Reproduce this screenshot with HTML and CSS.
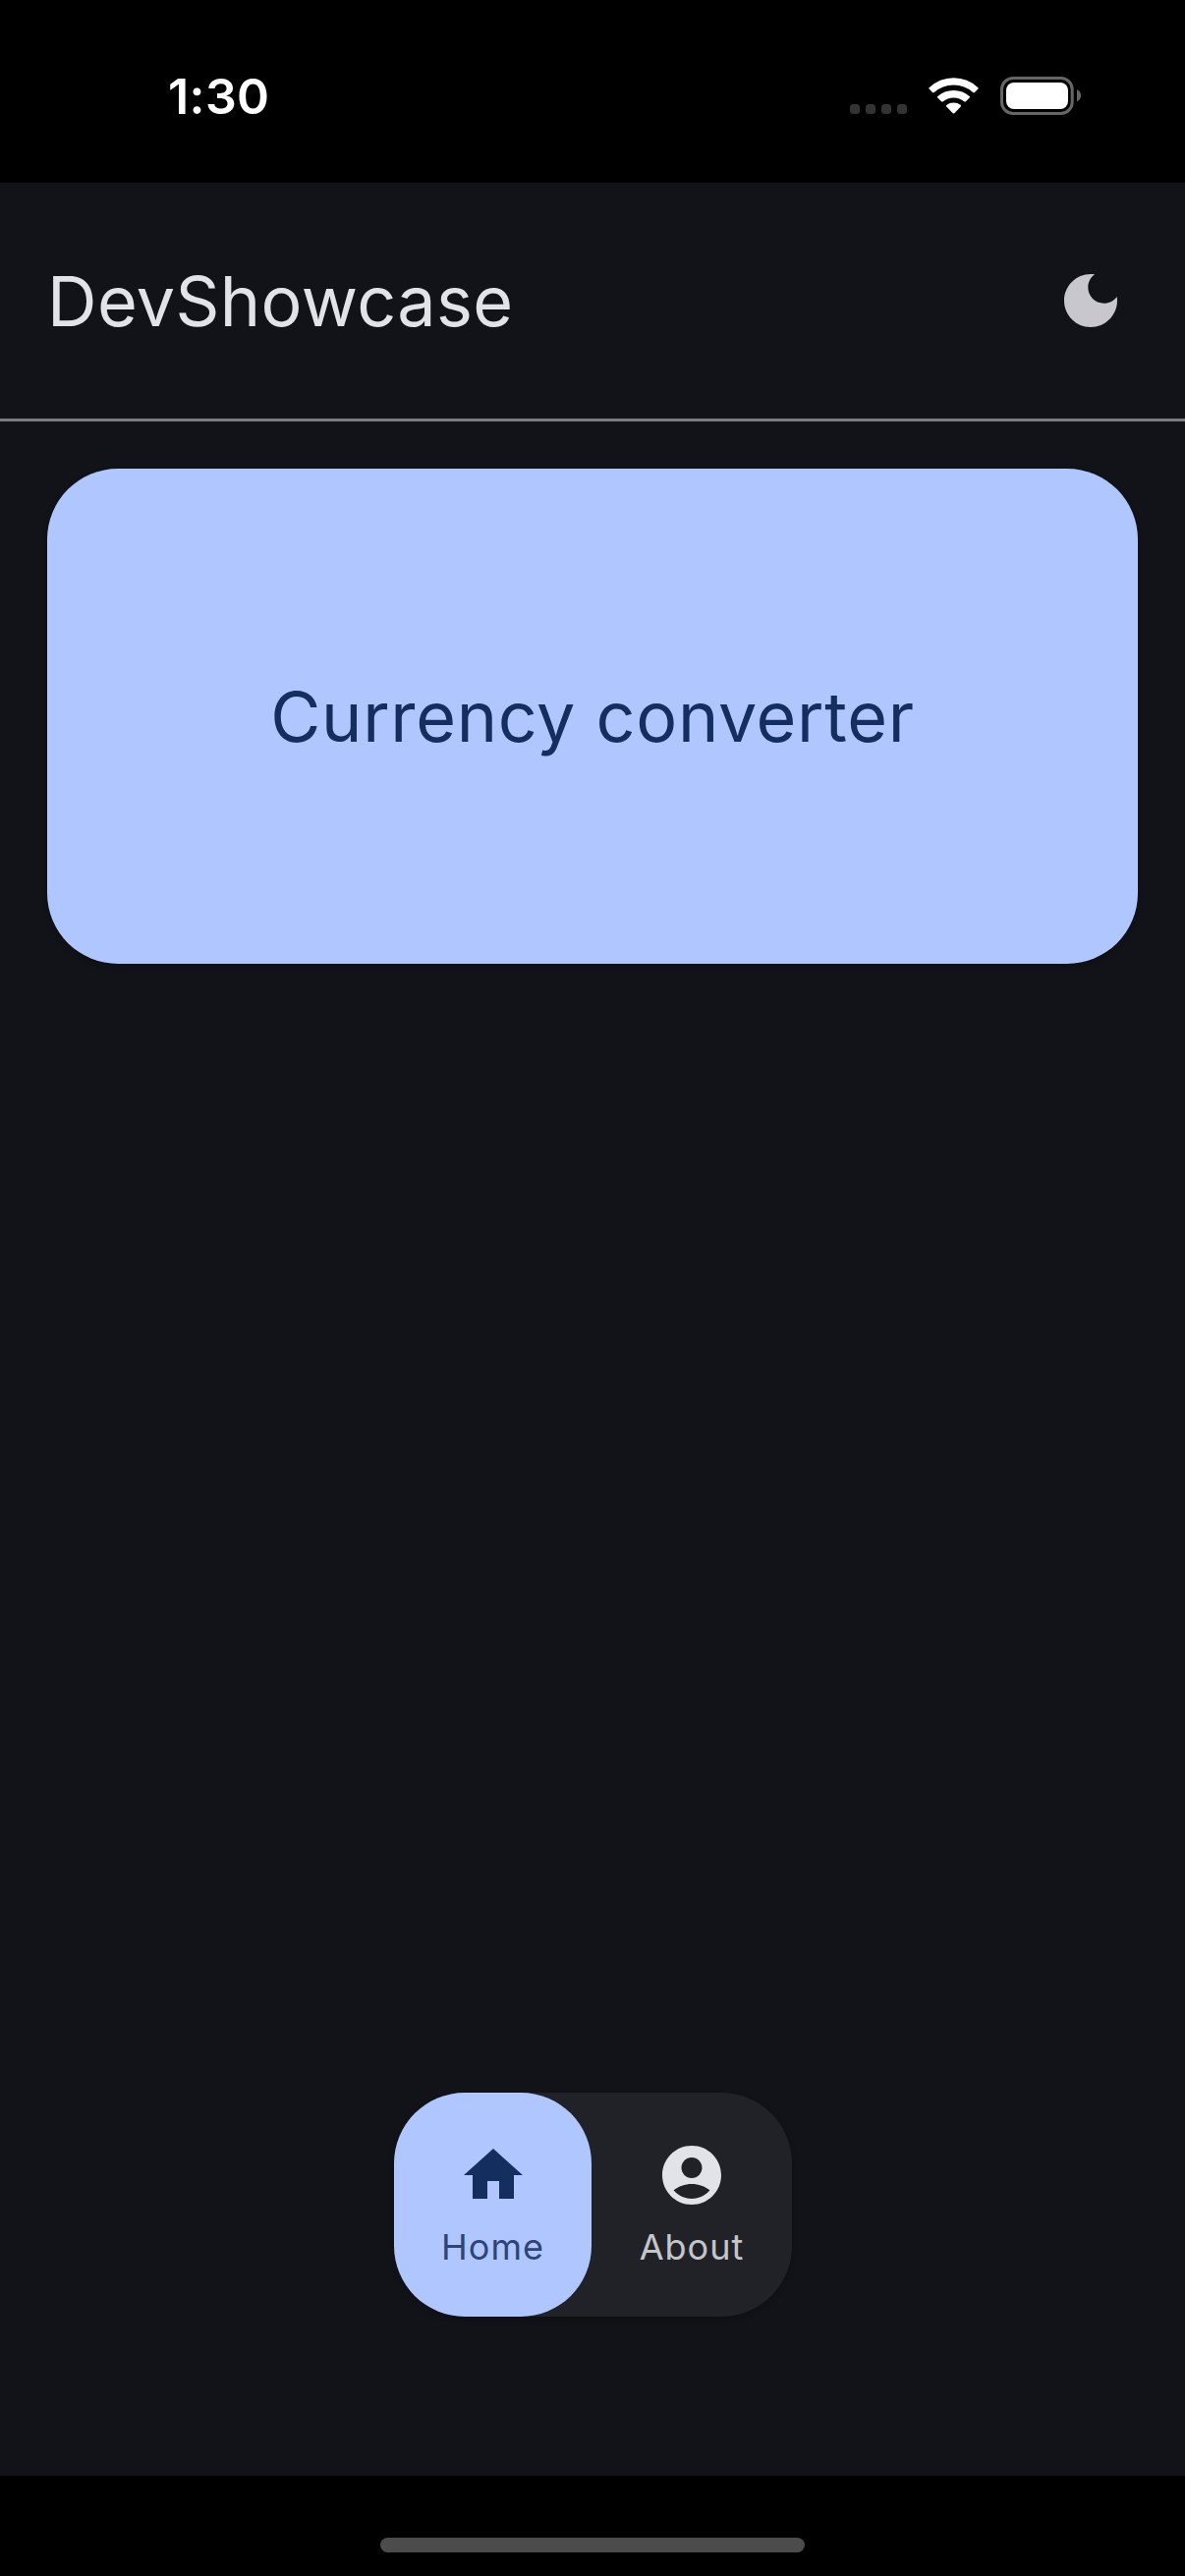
FILE: index.html
```html
<!DOCTYPE html>
<html lang="en">
<head>
<meta charset="utf-8">
<title>DevShowcase</title>
<link rel="stylesheet" href="styles.css">
</head>
<body>
<div class="screen">
  <div class="status-bar">
    <span class="time">1:30</span>
    <div class="indicators">
      <svg class="signal" width="58" height="10" viewBox="0 0 58 10"><rect width="10" height="10" rx="3.5"/><rect x="16" width="10" height="10" rx="3.5"/><rect x="32" width="10" height="10" rx="3.5"/><rect x="48" width="10" height="10" rx="3.5"/></svg>
      <svg class="wifi" width="51" height="38" viewBox="0 0 51 38"><path d="M.6 10.2Q-.1 10.9.6 11.6L4 15Q4.9 15.9 5.8 15Q14.2 7.5 25.5 7.5T45.2 15Q46.1 15.9 47 15L50.4 11.6Q51.100 10.900 50.400 10.200Q39.900 .2 25.500 .2T.6 10.200Z"/><path d="M9.300 19.100Q8.600 19.800 9.300 20.500L13 24.200Q13.900 25.100 14.800 24.200Q19.300 20.400 25.500 20.400T36.200 24.200Q37.100 25.100 38 24.200L41.700 20.500Q42.400 19.800 41.700 19.100Q35 13 25.500 13T9.300 19.100Z"/><path d="M18.200 28Q17.500 28.700 18.200 29.400L24.700 36.200Q25.500 37 26.300 36.200L32.800 29.400Q33.500 28.700 32.800 28Q29.700 25.600 25.500 25.600T18.200 28Z"/></svg>
      <svg class="battery" width="82" height="39" viewBox="0 0 82 39"><rect class="battery-shell" x="1.500" y="1.500" width="71.700" height="36" rx="11.500"/><rect x="6" y="6" width="63" height="27" rx="8"/><path class="battery-cap" d="M78 13Q82 15 82 19.200T78 25.400Z"/></svg>
    </div>
  </div>
  <header class="app-bar">
    <h1 class="title">DevShowcase</h1>
    <button class="theme-toggle" aria-label="Toggle theme"><svg class="icon" viewBox="0 0 24 24"><path d="M12 3c-4.970 0-9 4.030-9 9s4.030 9 9 9 9-4.030 9-9c0-.46-.04-.92-.1-1.360-.98 1.370-2.580 2.260-4.400 2.260-2.980 0-5.400-2.420-5.400-5.400 0-1.810.89-3.420 2.260-4.400-.44-.06-.9-.1-1.360-.1z"/></svg></button>
  </header>
  <main class="content">
    <a class="card"><span class="card-label">Currency converter</span></a>
  </main>
  <nav class="tabs">
    <a class="tab tab-home"><svg class="icon" viewBox="0 0 24 24"><path d="M10 20v-6h4v6h5v-8h3L12 3 2 12h3v8z"/></svg><span class="tab-label">Home</span></a>
    <a class="tab tab-about"><svg class="icon" viewBox="0 0 24 24"><path d="M12 2C6.480 2 2 6.480 2 12s4.480 10 10 10 10-4.480 10-10S17.520 2 12 2zm0 4c1.930 0 3.500 1.570 3.500 3.500S13.930 13 12 13s-3.500-1.570-3.500-3.500S10.070 6 12 6zm0 14c-2.030 0-4.430-.82-6.140-2.880C7.550 15.800 9.680 15 12 15s4.450.8 6.140 2.120C16.430 19.180 14.030 20 12 20z"/></svg><span class="tab-label">About</span></a>
  </nav>
  <footer class="gesture-area"><div class="home-indicator"></div></footer>
</div>
</body>
</html>
```
FILE: styles.css
```css
* { box-sizing: border-box; }
body { margin: 0; background: #000; font-family: Inter, "Liberation Sans", sans-serif; }
.screen { display: flex; flex-direction: column; width: 1206px; height: 2622px; background: #121318; }
svg { display: block; }

.status-bar { display: flex; justify-content: space-between; height: 186px; padding: 68px 106px 0 171px; background: #000; color: #fff; }
.time { font-size: 50px; line-height: 60px; font-weight: 600; letter-spacing: .4px; }
.indicators { display: flex; align-items: flex-start; fill: #fff; }
.signal { margin: 38px 22px 0 0; fill: #333; }
.wifi { margin: 11px 22px 0 0; }
.battery { margin-top: 10px; }
.battery-shell { fill: none; stroke: #666; stroke-width: 3; }
.battery-cap { fill: #666; }

.app-bar { display: flex; align-items: center; justify-content: space-between; height: 243px; padding: 0 60px 0 48px; border-bottom: 3px solid #7b7c81; }
.title { margin: 0; padding-top: 2px; font-size: 70px; line-height: 84px; font-weight: 400; letter-spacing: .4px; color: #e2e2e9; }
.theme-toggle { padding: 0; border: 0; background: none; color: #c7c7cd; }
.icon { width: 72px; height: 72px; fill: currentColor; }

.content { flex: 1; padding: 48px; }
.card { display: flex; align-items: center; justify-content: center; height: 504px; border-radius: 72px; background: #b0c6ff; color: #152e60; box-shadow: 0 3px 6px rgba(0, 0, 0, .2); }
.card-label { padding-top: 2px; font-size: 70px; line-height: 84px; letter-spacing: .7px; }

.tabs { display: flex; align-self: center; width: 405px; height: 228px; margin: 0 0 162px 1px; border-radius: 72px; background: #212227; color: #e2e2e9; box-shadow: 0 3px 6px rgba(0, 0, 0, .2); }
.tab { display: flex; flex-direction: column; align-items: center; padding-top: 48px; }
.tab-home { width: 201px; border-radius: 72px; background: #b0c6ff; color: #152e60; }
.tab-about { width: 204px; }
.tab-label { margin-top: 15px; font-size: 36px; line-height: 44px; letter-spacing: 1px; opacity: .85; }

.gesture-area { display: flex; justify-content: center; height: 102px; padding-top: 63px; background: #000; }
.home-indicator { width: 432px; height: 15px; border-radius: 8px; background: #4c4c4c; }
```
